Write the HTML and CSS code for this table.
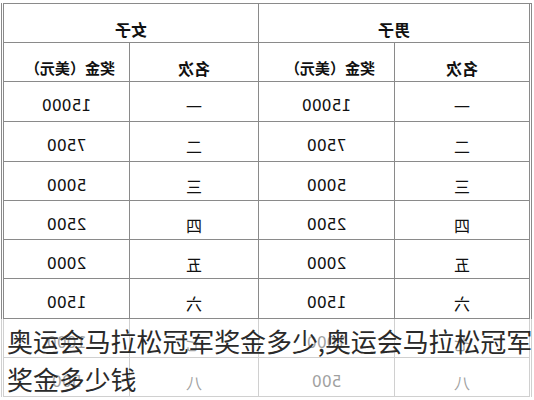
FILE: index.html
```html
<!DOCTYPE html>
<html lang="zh">
<head>
<meta charset="utf-8">
<title>奥运会马拉松冠军奖金</title>
<link rel="stylesheet" href="styles.css">
</head>
<body>
<div class="page">
  <div class="grid">
    <div class="cell head span2"><span class="flip">女子</span></div>
    <div class="cell head span2 last"><span class="flip">男子</span></div>
    <div class="cell head prize"><span class="flip">奖金（美元）</span></div>
    <div class="cell head"><span class="flip">名次</span></div>
    <div class="cell head prize"><span class="flip">奖金（美元）</span></div>
    <div class="cell head last"><span class="flip">名次</span></div>

    <div class="cell num"><span class="flip">15000</span></div>
    <div class="cell rank"><span class="flip">一</span></div>
    <div class="cell num"><span class="flip">15000</span></div>
    <div class="cell rank last"><span class="flip">一</span></div>

    <div class="cell num"><span class="flip">7500</span></div>
    <div class="cell rank"><span class="flip">二</span></div>
    <div class="cell num"><span class="flip">7500</span></div>
    <div class="cell rank last"><span class="flip">二</span></div>

    <div class="cell num"><span class="flip">5000</span></div>
    <div class="cell rank"><span class="flip">三</span></div>
    <div class="cell num"><span class="flip">5000</span></div>
    <div class="cell rank last"><span class="flip">三</span></div>

    <div class="cell num"><span class="flip">2500</span></div>
    <div class="cell rank"><span class="flip">四</span></div>
    <div class="cell num"><span class="flip">2500</span></div>
    <div class="cell rank last"><span class="flip">四</span></div>

    <div class="cell num"><span class="flip">2000</span></div>
    <div class="cell rank"><span class="flip">五</span></div>
    <div class="cell num"><span class="flip">2000</span></div>
    <div class="cell rank last"><span class="flip">五</span></div>

    <div class="cell num"><span class="flip">1500</span></div>
    <div class="cell rank"><span class="flip">六</span></div>
    <div class="cell num"><span class="flip">1500</span></div>
    <div class="cell rank last"><span class="flip">六</span></div>

    <div class="cell num"><span class="flip">1000</span></div>
    <div class="cell rank"><span class="flip">七</span></div>
    <div class="cell num"><span class="flip">1000</span></div>
    <div class="cell rank last"><span class="flip">七</span></div>

    <div class="cell num"><span class="flip">500</span></div>
    <div class="cell rank"><span class="flip">八</span></div>
    <div class="cell num"><span class="flip">500</span></div>
    <div class="cell rank last"><span class="flip">八</span></div>
  </div>
  <div class="fade"></div>
  <div class="caption">奥运会马拉松冠军奖金多少,奥运会马拉松冠军<br>奖金多少钱</div>
</div>
</body>
</html>
```

FILE: styles.css
```css
html, body {
  margin: 0;
  padding: 0;
  background: #ffffff;
}

.page {
  position: relative;
  width: 534px;
  height: 400px;
  overflow: hidden;
  padding-left: 1px;
  padding-top: 3px;
  box-sizing: border-box;
  font-family: "Liberation Sans", "Noto Sans CJK SC", sans-serif;
  color: #111;
}

.grid {
  display: grid;
  width: max-content;
  grid-template-columns: 126px 129px 136px 134px;
  grid-template-rows: 39px 39px 40px 40px 39px 39px 39px 40px 39px 39px;
  border-top: 1px solid #8a8a8a;
  border-left: 3px double #8a8a8a;
  border-right: 3px double #8a8a8a;
}

.cell {
  box-sizing: border-box;
  border-right: 1px solid #8a8a8a;
  border-bottom: 1px solid #8a8a8a;
  display: flex;
  align-items: center;
  justify-content: center;
  padding-top: 9px;
}

.cell.last {
  border-right: none;
}

.span2 {
  grid-column: span 2;
}

.flip {
  display: inline-block;
  transform: scaleX(-1);
  line-height: 18px;
}

.head {
  font-family: "Noto Sans CJK SC", sans-serif;
  font-weight: 700;
  font-size: 16px;
  padding-top: 11px;
}

.head.prize {
  font-size: 15px;
  padding-left: 8px;
}

.num {
  font-family: "DejaVu Sans", "Liberation Sans", sans-serif;
  font-size: 15.5px;
}

.rank {
  font-family: "Noto Sans CJK SC", sans-serif;
  font-size: 16px;
}

.fade {
  position: absolute;
  left: 0;
  top: 319px;
  width: 534px;
  height: 81px;
  background: rgba(255, 255, 255, 0.6);
}

.caption {
  position: absolute;
  left: 7px;
  top: 322px;
  font-family: "Noto Sans CJK SC", sans-serif;
  font-size: 26px;
  font-weight: 400;
  line-height: 38px;
  color: #2a2a2a;
  white-space: nowrap;
  letter-spacing: -0.1px;
}
```
